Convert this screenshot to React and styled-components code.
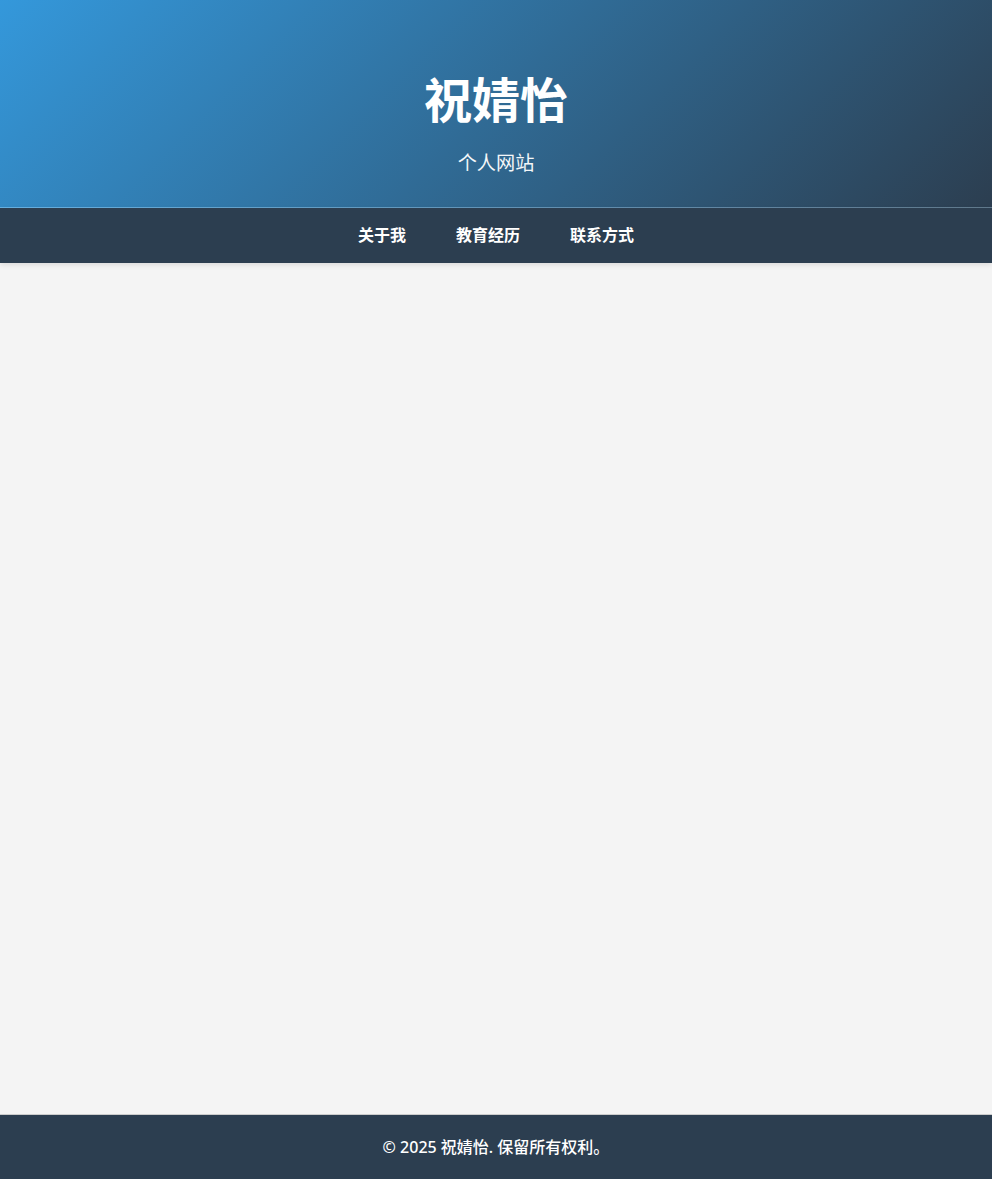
import React from 'react'
import styled, { createGlobalStyle } from 'styled-components'

const GlobalStyle = createGlobalStyle`
  * {
    box-sizing: border-box;
  }
  body {
    margin: 0;
    background: #f4f4f4;
    font-family: "Noto Sans", "Noto Sans CJK SC", sans-serif;
    color: #333;
    line-height: 1.5;
  }
`

const Page = styled.div`
  min-height: 100vh;
  display: flex;
  flex-direction: column;
`

const Header = styled.header`
  background: linear-gradient(135deg, #3498db 0%, #2c3e50 100%);
  color: #fff;
  text-align: center;
  padding: 64px 20px 30px;
  border-bottom: 1px solid rgba(255, 255, 255, 0.25);
`

const Title = styled.h1`
  margin: 0;
  font-size: 48px;
  font-weight: 700;
  line-height: 72px;
`

const Subtitle = styled.p`
  margin: 12px 0 0;
  font-size: 19.2px;
  line-height: 29px;
  opacity: 0.95;
`

const Nav = styled.nav`
  background: #2c3e50;
  display: flex;
  justify-content: center;
  box-shadow: 0 2px 5px rgba(0, 0, 0, 0.1);
  position: sticky;
  top: 0;
  z-index: 10;
`

const NavLink = styled.a`
  color: #fff;
  text-decoration: none;
  font-weight: 700;
  font-size: 16px;
  line-height: 25px;
  padding: 15px 25px;
  cursor: pointer;
`

const Main = styled.main`
  flex: 1;
`

const Footer = styled.footer`
  background: #2c3e50;
  color: #fff;
  text-align: center;
  font-size: 16px;
  font-weight: 500;
  line-height: 24px;
  padding: 20px;
  border-top: 1px solid #ccc;
`

const App = () => {
  const links = ['关于我', '教育经历', '联系方式']

  return (
    <Page>
      <GlobalStyle />
      <Header>
        <Title>祝婧怡</Title>
        <Subtitle>个人网站</Subtitle>
      </Header>
      <Nav>
        {links.map((l) => (
          <NavLink key={l}>{l}</NavLink>
        ))}
      </Nav>
      <Main />
      <Footer>© 2025 祝婧怡. 保留所有权利。</Footer>
    </Page>
  )
}

export default App
